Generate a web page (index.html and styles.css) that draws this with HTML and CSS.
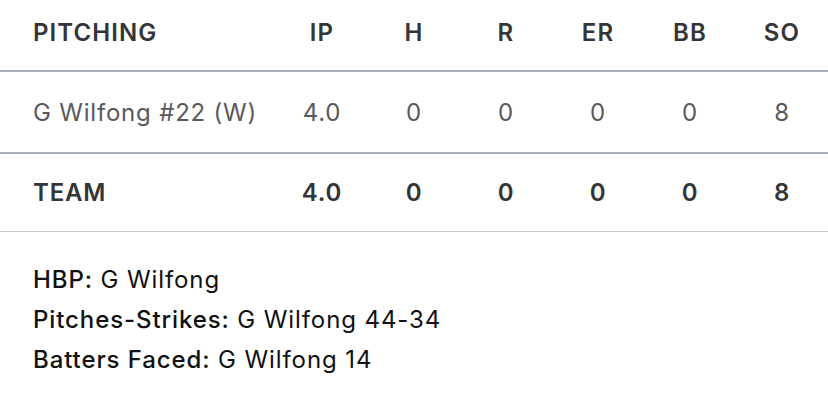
FILE: index.html
```html
<!DOCTYPE html>
<html>
<head>
<meta charset="utf-8">
<link rel="stylesheet" href="styles.css">
</head>
<body>
<div class="box">
  <div class="row head">
    <div class="name">PITCHING</div>
    <div class="stat">IP</div>
    <div class="stat">H</div>
    <div class="stat">R</div>
    <div class="stat">ER</div>
    <div class="stat">BB</div>
    <div class="stat">SO</div>
  </div>
  <div class="row player">
    <div class="name">G Wilfong #22 (W)</div>
    <div class="stat">4.0</div>
    <div class="stat">0</div>
    <div class="stat">0</div>
    <div class="stat">0</div>
    <div class="stat">0</div>
    <div class="stat">8</div>
  </div>
  <div class="row team">
    <div class="name">TEAM</div>
    <div class="stat">4.0</div>
    <div class="stat">0</div>
    <div class="stat">0</div>
    <div class="stat">0</div>
    <div class="stat">0</div>
    <div class="stat">8</div>
  </div>
  <div class="notes">
    <div class="note"><span class="label">HBP:</span> G Wilfong</div>
    <div class="note"><span class="label">Pitches-Strikes:</span> G Wilfong 44-34</div>
    <div class="note"><span class="label">Batters Faced:</span> G Wilfong 14</div>
  </div>
</div>
</body>
</html>
```

FILE: styles.css
```css
html, body {
  margin: 0;
  padding: 0;
  background: #ffffff;
}
body {
  font-family: Inter, "Noto Sans", sans-serif;
  width: 828px;
  height: 403px;
  overflow: hidden;
}
.row {
  display: grid;
  grid-template-columns: 276px repeat(6, 92px);
  align-items: center;
  font-size: 24px;
  letter-spacing: 0.8px;
}
.name {
  padding-left: 33px;
}
.stat {
  text-align: center;
}
.head {
  height: 64px;
  padding-bottom: 6px;
  border-bottom: 2px solid #a9b0b7;
  font-weight: 600;
  letter-spacing: 1.1px;
  color: #333539;
}
.player {
  height: 80px;
  border-bottom: 2px solid #a9b0b7;
  font-weight: 400;
  color: #58595c;
}
.team {
  height: 76px;
  padding-bottom: 1px;
  border-bottom: 1px solid #c9c9c9;
  font-weight: 600;
  color: #333539;
}
.notes {
  padding-top: 28px;
  padding-left: 33px;
  font-size: 24px;
  letter-spacing: 0.9px;
  line-height: 40px;
  color: #111111;
}
.label {
  font-weight: 500;
}
```
